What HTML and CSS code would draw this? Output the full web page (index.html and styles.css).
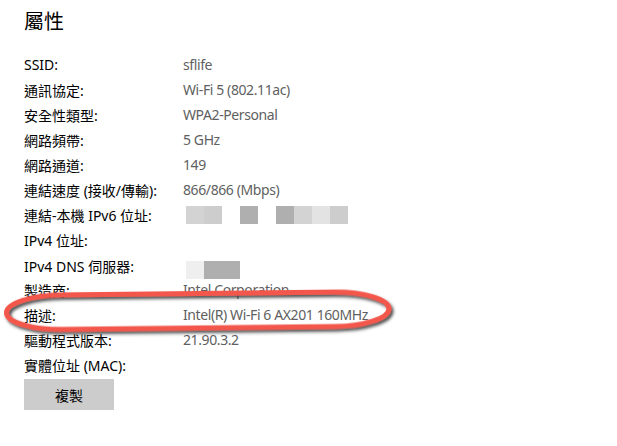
FILE: index.html
```html
<!DOCTYPE html>
<html lang="zh-Hant">
<head>
    <meta charset="UTF-8">
    <meta name="viewport" content="width=device-width, initial-scale=1.0">
    <title>屬性</title>
    <link rel="stylesheet" href="styles.css">
</head>
<body>
    <div class="page">
        <h1>屬性</h1>
        <div class="props">
            <div class="row"><span class="label">SSID:</span><span class="value">sflife</span></div>
            <div class="row"><span class="label">通訊協定:</span><span class="value">Wi-Fi 5 (802.11ac)</span></div>
            <div class="row"><span class="label">安全性類型:</span><span class="value">WPA2-Personal</span></div>
            <div class="row"><span class="label">網路頻帶:</span><span class="value">5 GHz</span></div>
            <div class="row"><span class="label">網路通道:</span><span class="value">149</span></div>
            <div class="row"><span class="label">連結速度 (接收/傳輸):</span><span class="value">866/866 (Mbps)</span></div>
            <div class="row">
                <span class="label">連結-本機 IPv6 位址:</span>
                <span class="mosaic">
                    <i class="m1"></i><i class="m1b"></i><i></i><i class="m3"></i><i></i><i class="m3"></i><i class="m1"></i><i class="m2"></i><i class="m1b"></i>
                </span>
            </div>
            <div class="row"><span class="label">IPv4 位址:</span><span class="value"></span></div>
            <div class="row">
                <span class="label">IPv4 DNS 伺服器:</span>
                <span class="mosaic dns">
                    <i class="m0"></i><i class="m3"></i><i class="m3"></i>
                </span>
            </div>
            <div class="row"><span class="label">製造商:</span><span class="value">Intel Corporation</span></div>
            <div class="row"><span class="label">描述:</span><span class="value">Intel(R) Wi-Fi 6 AX201 160MHz</span></div>
            <div class="row"><span class="label">驅動程式版本:</span><span class="value">21.90.3.2</span></div>
            <div class="row"><span class="label">實體位址 (MAC):</span><span class="value"></span></div>
        </div>
        <button type="button" class="btn">複製</button>
    </div>

    <!-- red highlight drawn over the description row -->
    <svg class="mark" width="617" height="446" viewBox="0 0 617 446">
        <defs>
            <filter id="shade" x="-5%" y="-40%" width="110%" height="180%">
                <feDropShadow dx="2" dy="2.5" stdDeviation="1.5" flood-color="#333" flood-opacity="0.85"/>
            </filter>
        </defs>
        <rect x="6.5" y="293.5" width="382.5" height="34.5" rx="55" ry="17.25"
              transform="rotate(-0.6 198 311)"
              fill="none" stroke="#f3574c" stroke-width="5" filter="url(#shade)"/>
    </svg>
</body>
</html>
```

FILE: styles.css
```css
body {
    margin: 0;
    font-family: "Noto Sans", "Noto Sans CJK TC", sans-serif;
    background: #fff;
    color: #000;
}
.page {
    padding: 9px 24px 0;
}
h1 {
    margin: 0 0 17px;
    font-size: 20px;
    font-weight: normal;
    line-height: 26px;
}
.props {
    display: flex;
    flex-direction: column;
}
.row {
    display: grid;
    grid-template-columns: 159px 1fr;
    align-items: center;
    height: 25px;
    font-size: 14px;
}
.value {
    color: #5f5f5f;
    letter-spacing: -0.4px;
}
.mosaic {
    display: flex;
    margin-left: 3px;
}
.mosaic i {
    width: 18px;
    height: 18px;
    background: #fff;
}
.mosaic.dns {
    margin-top: 9px;
}
.mosaic .m0 { background: #efefef; }
.mosaic .m1 { background: #d3d3d3; }
.mosaic .m1b { background: #cdcdcd; }
.mosaic .m2 { background: #e3e3e3; }
.mosaic .m3 { background: #afafaf; }
.btn {
    margin-top: 2px;
    width: 90px;
    height: 31px;
    border: none;
    background: #cccccc;
    font-family: "Noto Sans CJK TC", sans-serif;
    font-size: 14px;
    color: #000;
}
.mark {
    position: absolute;
    left: 0;
    top: 0;
    pointer-events: none;
}
```
